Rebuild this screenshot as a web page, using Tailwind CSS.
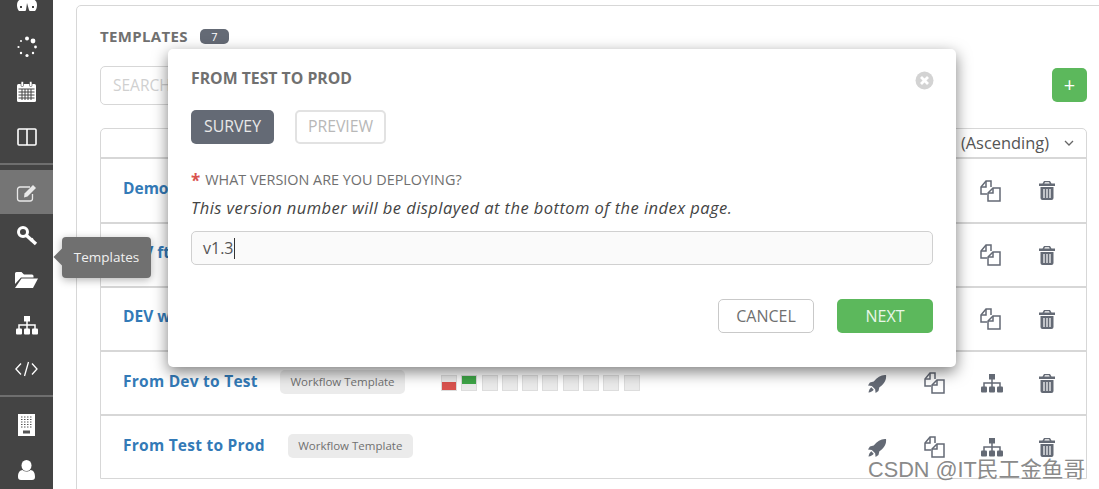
<!DOCTYPE html>
<html lang="en">
<head>
<meta charset="UTF-8">
<title>Templates</title>
<script src="https://cdn.jsdelivr.net/npm/@tailwindcss/browser@4"></script>
</head>
<body class="bg-white overflow-hidden font-['Open_Sans',sans-serif]">
<div class="relative w-[1099px] h-[489px] overflow-hidden flex">

  <!-- Sidebar -->
  <nav class="w-[53px] h-[489px] shrink-0 bg-[#444444] flex flex-col overflow-hidden text-white *:shrink-0">
    <div class="h-[49px] mt-[-24px] pt-[21px] flex justify-center items-start">
      <svg width="22" height="16" viewBox="0 0 22 16"><path fill="#fff" d="M11 1C5 1 1 3 1 8c0 3 1 5 2 6h16c1-1 2-3 2-6 0-5-4-7-10-7z"/><path fill="#444" d="M10 13l1-7 2 7a2 2 0 1 1-3 0zM4 9h2v2H4zM16 9h2v2h-2z"/></svg>
    </div>
    <div class="h-[44px] flex justify-center items-center">
      <svg width="22" height="22" viewBox="0 0 22 22" fill="#fff"><circle cx="11" cy="2.5" r="2"/><circle cx="17" cy="5" r="2.4"/><circle cx="19.5" cy="11" r="1.4"/><circle cx="17" cy="17" r="1.2"/><circle cx="11" cy="19.5" r="1.6"/><circle cx="5" cy="17" r="1.2"/><circle cx="2.5" cy="11" r="1.1"/><circle cx="5" cy="5" r="1"/></svg>
    </div>
    <div class="h-[46px] flex justify-center items-center">
      <svg width="21" height="22" viewBox="0 0 21 22"><rect x="1" y="3" width="19" height="18" rx="1.5" fill="#fff"/><rect x="5" y="0.5" width="2.5" height="5" rx="1" fill="#fff" stroke="#444" stroke-width=".6"/><rect x="13.5" y="0.5" width="2.5" height="5" rx="1" fill="#fff" stroke="#444" stroke-width=".6"/><path stroke="#444" stroke-width="1" d="M2.5 8h16M2.5 11h16M2.5 14h16M2.5 17h16M6 8v11M9 8v11M12 8v11M15 8v11"/></svg>
    </div>
    <div class="h-[44px] flex justify-center items-center">
      <svg width="20" height="18" viewBox="0 0 20 18" fill="none" stroke="#fff" stroke-width="1.600"><rect x="1" y="1" width="18" height="16" rx="1"/><path d="M10 1v16"/></svg>
    </div>
    <div class="h-[2px] mt-[4px] bg-[#6f6f6f]"></div>
    <div class="h-[5px]"></div>
    <div class="h-[44px] bg-[#757575] flex justify-center items-center">
      <svg width="22" height="19" viewBox="0 0 22 19" fill="none"><path stroke="#e8e8e8" stroke-width="1.300" d="M14 4H4a2.500 2.500 0 0 0-2.500 2.500v9A2.500 2.500 0 0 0 4 18h10a2.500 2.500 0 0 0 2.500-2.500V11"/><path fill="#e8e8e8" d="M8.500 10.500 17 2l3 3-8.500 8.500-3.500 1z"/></svg>
    </div>
    <div class="h-[44px] flex justify-center items-center">
      <svg width="22" height="22" viewBox="0 0 22 22" fill="none" stroke="#fff"><circle cx="7" cy="7" r="4.500" stroke-width="3"/><path stroke-width="3.400" d="M10.500 10.500l9.500 8.500"/><path stroke-width="2" d="M17 13.500l-2.500 2.500"/></svg>
    </div>
    <div class="h-[44px] flex justify-center items-center">
      <svg width="23" height="18" viewBox="0 0 23 18" fill="#fff"><path d="M0 2.500A1.500 1.500 0 0 1 1.500 1h5L9 3.500h8A1.500 1.500 0 0 1 18.500 5v1.500H6L0 13z"/><path d="M6.500 7.500H23L18 17H0z"/></svg>
    </div>
    <div class="h-[46px] flex justify-center items-center">
      <svg width="22" height="19" viewBox="0 0 22 19" fill="#fff"><rect x="8" y="0" width="6" height="5.500"/><rect x="0" y="12.500" width="6" height="6" rx="1"/><rect x="8" y="12.500" width="6" height="6" rx="1"/><rect x="16" y="12.500" width="6" height="6" rx="1"/><path fill="none" stroke="#fff" stroke-width="1.500" d="M11 5v8M3 13V9h16v4"/></svg>
    </div>
    <div class="h-[42px] flex justify-center items-center">
      <svg width="23" height="16" viewBox="0 0 23 16" fill="none" stroke="#fff" stroke-width="1.300"><path d="M6 2.500.9 8 6 13.500M17 2.500 22 8l-5 5.500M13.500 1l-4 14"/></svg>
    </div>
    <div class="h-[2px] mt-[5px] bg-[#6f6f6f]"></div>
    <div class="h-[46px] mt-[5px] flex justify-center items-center">
      <svg width="17" height="22" viewBox="0 0 17 22"><rect width="17" height="22" fill="#fff"/><path stroke="#555" stroke-width="1" stroke-dasharray="1.500 1.500" d="M3 3h11M3 5.500h11M3 8h11M3 10.500h11M3 13h11"/><rect x="5" y="16.500" width="7" height="3" fill="#555"/></svg>
    </div>
    <div class="h-[44px] flex justify-center items-center">
      <svg width="17" height="20" viewBox="0 0 17 20" fill="#fff"><ellipse cx="8.500" cy="5.500" rx="5" ry="5.500"/><path d="M0 17c0-5 2-6.500 4.500-7 2.500 2 5.500 2 8 0 2.500.5 4.500 2 4.500 7 0 2-1 3-3 3H3c-2 0-3-1-3-3z"/></svg>
    </div>
  </nav>

  <!-- Panel -->
  <main class="flex-1 min-w-0 pt-[5px] pl-[23px]">
    <div class="h-[520px] w-[1040px] border border-[#d7d7d7] rounded-[5px] pt-[21px] pl-[23px]">
      <div class="flex items-center h-[18px]">
        <h1 class="text-[15px] font-bold text-[#707070] tracking-[.35px]">TEMPLATES</h1>
        <span class="ml-[12px] w-[29px] h-[15px] rounded-[5px] bg-[#646a75] text-white text-[11px] leading-[15px] text-center">7</span>
      </div>
      <div class="flex mt-[21px] w-[985px] items-start">
        <div class="w-[300px] h-[39px] border border-[#d7d7d7] rounded-[5px] pl-[12px] text-[15.500px] leading-[37px] text-[#d0d0d0]">SEARCH</div>
        <div class="ml-auto mr-[-2px] mt-[2px] w-[35px] h-[34px] rounded-[5px] bg-[#5cb85c] flex items-center justify-center text-white text-[20px] leading-none">+</div>
      </div>
      <section class="mt-[23px] w-[987px] border border-[#d7d7d7] rounded-t-[5px]">
        <div class="h-[28px] flex items-center justify-end pr-[12px] text-[16.400px] text-[#555]">
          <span>(Ascending)</span>
          <svg class="ml-[15px]" width="10" height="6" viewBox="0 0 10 6" fill="none" stroke="#666" stroke-width="1.300"><path d="M1 1l4 4 4-4"/></svg>
        </div>
        <div class="h-[65px] border-t-2 border-[#d7d7d7] flex items-center pl-[22px]">
          <a class="mt-[-4px] text-[15.500px] font-bold text-[#337ab7]">Demo</a>
          <span class="ml-auto mr-[31px] flex items-center gap-[38px]">
            <svg class="w-[22px] h-[22px]" viewBox="0 0 22 22" fill="none" stroke="#646a75" stroke-width="1.500"><path d="M8 14H2V7l5-6h5v6"/><path d="M7 1v6H2"/><path fill="#fff" d="M9 13l5-5h7v13H9z"/><path d="M14 8v5H9"/></svg>
            <svg class="w-[16px] h-[19px]" viewBox="0 0 16 19" fill="#646a75"><path fill-rule="evenodd" d="M5 0h6l1.500 2.500H16V5H0V2.500h3.500zM6 1.300 5.300 2.500h5.400L10 1.300z"/><path d="M1.500 6h13v11a2 2 0 0 1-2 2h-9a2 2 0 0 1-2-2z"/><path stroke="#fff" stroke-width="1.200" d="M5 8v9M8 8v9M11 8v9"/></svg>
          </span>
        </div>
        <div class="h-[64px] border-t-2 border-[#d7d7d7] flex items-center pl-[22px]">
          <a class="mt-[-4px] text-[15.500px] font-bold text-[#337ab7]">DEV ftp</a>
          <span class="ml-auto mr-[31px] flex items-center gap-[38px]">
            <svg class="w-[22px] h-[22px]" viewBox="0 0 22 22" fill="none" stroke="#646a75" stroke-width="1.500"><path d="M8 14H2V7l5-6h5v6"/><path d="M7 1v6H2"/><path fill="#fff" d="M9 13l5-5h7v13H9z"/><path d="M14 8v5H9"/></svg>
            <svg class="w-[16px] h-[19px]" viewBox="0 0 16 19" fill="#646a75"><path fill-rule="evenodd" d="M5 0h6l1.500 2.500H16V5H0V2.500h3.500zM6 1.300 5.300 2.500h5.400L10 1.300z"/><path d="M1.500 6h13v11a2 2 0 0 1-2 2h-9a2 2 0 0 1-2-2z"/><path stroke="#fff" stroke-width="1.200" d="M5 8v9M8 8v9M11 8v9"/></svg>
          </span>
        </div>
        <div class="h-[64px] border-t-2 border-[#d7d7d7] flex items-center pl-[22px]">
          <a class="mt-[-4px] text-[15.500px] font-bold text-[#337ab7]">DEV workflow</a>
          <span class="ml-auto mr-[31px] flex items-center gap-[38px]">
            <svg class="w-[22px] h-[22px]" viewBox="0 0 22 22" fill="none" stroke="#646a75" stroke-width="1.500"><path d="M8 14H2V7l5-6h5v6"/><path d="M7 1v6H2"/><path fill="#fff" d="M9 13l5-5h7v13H9z"/><path d="M14 8v5H9"/></svg>
            <svg class="w-[16px] h-[19px]" viewBox="0 0 16 19" fill="#646a75"><path fill-rule="evenodd" d="M5 0h6l1.500 2.500H16V5H0V2.500h3.500zM6 1.300 5.300 2.500h5.400L10 1.300z"/><path d="M1.500 6h13v11a2 2 0 0 1-2 2h-9a2 2 0 0 1-2-2z"/><path stroke="#fff" stroke-width="1.200" d="M5 8v9M8 8v9M11 8v9"/></svg>
          </span>
        </div>
        <div class="h-[64px] border-t-2 border-[#d7d7d7] flex items-center pl-[22px]">
          <a class="w-[135px] mt-[-3px] text-[15.500px] font-bold text-[#337ab7] tracking-[.25px] whitespace-nowrap">From Dev to Test</a>
          <span class="ml-[22px] mt-[-2px] w-[125px] h-[24px] rounded-[5px] bg-[#ebebeb] text-[#707070] text-[11.500px] leading-[24px] text-center">Workflow Template</span>
          <span class="ml-[36px] flex gap-[4.300px]">
            <span class="w-[16px] h-[16px] bg-[#ebebeb] border border-[#ddd] flex items-end"><span class="w-full h-[8px] bg-[#d9534f]"></span></span>
            <span class="w-[16px] h-[16px] bg-[#ebebeb] border border-[#ddd]"><span class="block w-full h-[8px] bg-[#3fa648]"></span></span>
            <span class="w-[16px] h-[16px] bg-[#ebebeb] border border-[#ddd]"></span>
            <span class="w-[16px] h-[16px] bg-[#ebebeb] border border-[#ddd]"></span>
            <span class="w-[16px] h-[16px] bg-[#ebebeb] border border-[#ddd]"></span>
            <span class="w-[16px] h-[16px] bg-[#ebebeb] border border-[#ddd]"></span>
            <span class="w-[16px] h-[16px] bg-[#ebebeb] border border-[#ddd]"></span>
            <span class="w-[16px] h-[16px] bg-[#ebebeb] border border-[#ddd]"></span>
            <span class="w-[16px] h-[16px] bg-[#ebebeb] border border-[#ddd]"></span>
            <span class="w-[16px] h-[16px] bg-[#ebebeb] border border-[#ddd]"></span>
          </span>
          <span class="ml-auto mr-[31px] flex items-center gap-[36px]">
            <svg class="w-[19px] h-[19px]" viewBox="0 0 20 20" fill="#646a75"><path d="M19 1c.5 5-1.500 9-7 13l-1 4-3 2-.5-4L4 12.500 0 12l2-3 4-1C10 3 14 .5 19 1z"/><path d="M3.500 14c-1.500 1-2.500 3-3 5.500 2.500-.5 4.500-1.500 5.500-3z"/></svg>
            <svg class="w-[22px] h-[22px]" viewBox="0 0 22 22" fill="none" stroke="#646a75" stroke-width="1.500"><path d="M8 14H2V7l5-6h5v6"/><path d="M7 1v6H2"/><path fill="#fff" d="M9 13l5-5h7v13H9z"/><path d="M14 8v5H9"/></svg>
            <svg class="w-[22px] h-[19px]" viewBox="0 0 22 19" fill="#646a75"><rect x="8" y="0" width="6" height="5.500"/><rect x="0" y="12.500" width="6" height="6" rx="1"/><rect x="8" y="12.500" width="6" height="6" rx="1"/><rect x="16" y="12.500" width="6" height="6" rx="1"/><path fill="none" stroke="#646a75" stroke-width="1.500" d="M11 5v8M3 13V9h16v4"/></svg>
            <svg class="w-[16px] h-[19px]" viewBox="0 0 16 19" fill="#646a75"><path fill-rule="evenodd" d="M5 0h6l1.500 2.500H16V5H0V2.500h3.500zM6 1.300 5.300 2.500h5.400L10 1.300z"/><path d="M1.500 6h13v11a2 2 0 0 1-2 2h-9a2 2 0 0 1-2-2z"/><path stroke="#fff" stroke-width="1.200" d="M5 8v9M8 8v9M11 8v9"/></svg>
          </span>
        </div>
        <div class="h-[64px] border-t-2 border-[#d7d7d7] flex items-center pl-[22px]">
          <a class="mt-[-3px] text-[15.500px] font-bold text-[#337ab7] tracking-[.25px] whitespace-nowrap">From Test to Prod</a>
          <span class="ml-[23px] mt-[-2px] w-[125px] h-[24px] rounded-[5px] bg-[#ebebeb] text-[#707070] text-[11.500px] leading-[24px] text-center">Workflow Template</span>
          <span class="ml-auto mr-[31px] flex items-center gap-[36px]">
            <svg class="w-[19px] h-[19px]" viewBox="0 0 20 20" fill="#646a75"><path d="M19 1c.5 5-1.500 9-7 13l-1 4-3 2-.5-4L4 12.500 0 12l2-3 4-1C10 3 14 .5 19 1z"/><path d="M3.500 14c-1.500 1-2.500 3-3 5.500 2.500-.5 4.500-1.500 5.500-3z"/></svg>
            <svg class="w-[22px] h-[22px]" viewBox="0 0 22 22" fill="none" stroke="#646a75" stroke-width="1.500"><path d="M8 14H2V7l5-6h5v6"/><path d="M7 1v6H2"/><path fill="#fff" d="M9 13l5-5h7v13H9z"/><path d="M14 8v5H9"/></svg>
            <svg class="w-[22px] h-[19px]" viewBox="0 0 22 19" fill="#646a75"><rect x="8" y="0" width="6" height="5.500"/><rect x="0" y="12.500" width="6" height="6" rx="1"/><rect x="8" y="12.500" width="6" height="6" rx="1"/><rect x="16" y="12.500" width="6" height="6" rx="1"/><path fill="none" stroke="#646a75" stroke-width="1.500" d="M11 5v8M3 13V9h16v4"/></svg>
            <svg class="w-[16px] h-[19px]" viewBox="0 0 16 19" fill="#646a75"><path fill-rule="evenodd" d="M5 0h6l1.500 2.500H16V5H0V2.500h3.500zM6 1.300 5.300 2.500h5.400L10 1.300z"/><path d="M1.500 6h13v11a2 2 0 0 1-2 2h-9a2 2 0 0 1-2-2z"/><path stroke="#fff" stroke-width="1.200" d="M5 8v9M8 8v9M11 8v9"/></svg>
          </span>
        </div>
      </section>
    </div>
  </main>

  <!-- Tooltip -->
  <div class="absolute left-[62px] top-[237px] w-[89px] h-[41px] rounded-[4px] bg-[#707070] text-[#f0f0f0] text-[13.500px] leading-[41px] text-center shadow-[0_2px_8px_rgba(0,0,0,.3)]">
    <span class="absolute left-[-6px] top-[14px] w-[12px] h-[12px] rotate-45 bg-[#707070]"></span>
    <span class="relative">Templates</span>
  </div>

  <!-- Survey modal -->
  <div class="absolute left-[168px] top-[49px] w-[788px] h-[318px] bg-white rounded-[5px] shadow-[0_5px_15px_rgba(0,0,0,.5)] pt-[21px] px-[23px]">
    <div class="flex items-center justify-between h-[18px]">
      <h2 class="text-[15.800px] font-bold text-[#707070]">FROM TEST TO PROD</h2>
      <svg class="mr-[-1px] mt-[2px]" width="19" height="19" viewBox="0 0 19 19"><circle cx="9.500" cy="9.500" r="9" fill="#d3d3d3"/><path stroke="#fff" stroke-width="2.800" d="M6 6l7 7M13 6l-7 7"/></svg>
    </div>
    <div class="flex gap-[21px] mt-[22px]">
      <button class="w-[83px] h-[34px] rounded-[5px] bg-[#646a75] text-[#e8e8e8] text-[15.800px]">SURVEY</button>
      <button class="w-[91px] h-[34px] rounded-[5px] border-2 border-[#e2e2e2] text-[#b8b8b8] text-[15.800px]">PREVIEW</button>
    </div>
    <div class="mt-[25px] h-[22px] flex items-center text-[14.400px] text-[#707070]">
      <span class="text-[#d9534f] text-[17px] font-bold mr-[5px] leading-none">*</span>WHAT VERSION ARE YOU DEPLOYING?
    </div>
    <p class="mt-[7px] text-[16.500px] tracking-[.45px] leading-[20px] italic text-[#444] whitespace-nowrap">This version number will be displayed at the bottom of the index page.</p>
    <div class="mt-[13px] w-[742px] h-[34px] border border-[#d0d0d0] rounded-[5px] bg-[#fafafa] pl-[11px] text-[16px] leading-[32px] text-[#555] flex items-center">v1.3<span class="w-px h-[21px] bg-[#333]"></span></div>
    <div class="flex justify-end gap-[23px] mt-[34px] w-[742px]">
      <button class="w-[96px] h-[34px] rounded-[5px] border border-[#c9c9c9] bg-white text-[#707070] text-[16px]">CANCEL</button>
      <button class="w-[96px] h-[34px] rounded-[5px] bg-[#5cb85c] text-[#e9f6e9] text-[16px]">NEXT</button>
    </div>
  </div>

  <!-- Watermark -->
  <div class="absolute left-[868px] top-[457px] text-[21.700px] leading-[26px] text-[#8a8a8a] font-['Liberation_Sans','Noto_Sans_CJK_SC',sans-serif] whitespace-nowrap">CSDN @IT民工金鱼哥</div>
</div>
</body>
</html>
